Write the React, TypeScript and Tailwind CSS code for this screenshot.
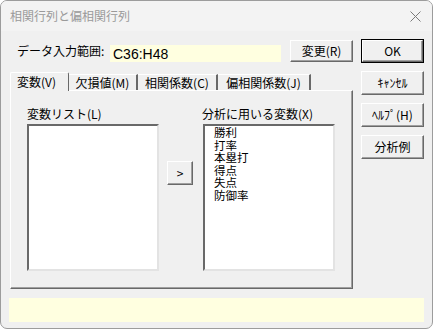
import React from 'react'

const font = { fontFamily: '"Noto Sans CJK JP", "Noto Sans", sans-serif' }

// classic raised 3D button
function Btn({ label, def = false, className = '' }: { label: string; def?: boolean; className?: string }) {
  return (
    <div className={`${def ? 'border border-black' : ''} ${className}`}>
      <div className="h-full w-full flex items-center justify-center border border-t-white border-l-white border-r-[#696969] border-b-[#696969] shadow-[inset_-1px_-1px_0_#a0a0a0] bg-[#f0f0f0] text-[12px] leading-[14px] text-black">
        {label}
      </div>
    </div>
  )
}

function ListBox({ items = [] }: { items?: string[] }) {
  return (
    <div className="w-[132px] h-[147px] bg-white border-2 border-t-[#696969] border-l-[#696969] border-r-[#e3e3e3] border-b-[#e3e3e3] pl-[9px] pt-0">
      {items.map(it => (
        <div key={it} className="text-[11.5px] leading-[12.5px] text-black">{it}</div>
      ))}
    </div>
  )
}

export default function App() {
  const tabs = [
    { label: '欠損値(M)', w: 'w-[69px]' },
    { label: '相関係数(C)', w: 'w-[80px]' },
    { label: '偏相関係数(J)', w: 'w-[93px]' },
  ]

  return (
    <div style={font} className="w-[433px] h-[329px] bg-[#f0f0f0] border border-[#9c9c9c] rounded-[7px] overflow-hidden flex flex-col">
      {/* ================= TITLE BAR ================= */}
      <div className="h-[30px] flex items-center justify-between pl-[9px] pr-[10px] bg-[#f3f3f3]">
        <span className="text-[12px] leading-[14px] text-[#9a9a9a]">相関行列と偏相関行列</span>
        <svg width="11" height="11" viewBox="0 0 11 11" className="mr-[1px]">
          <path d="M0.5 0.5 L10.5 10.5 M10.5 0.5 L0.5 10.5" stroke="#7a7a7a" strokeWidth="1" />
        </svg>
      </div>

      {/* ================= BODY ================= */}
      <div className="flex pl-[9px]">
        <div className="w-[343px]">
          <div className="mt-[9px] h-[22px] flex items-center">
            <span className="pl-[7px] w-[100px] text-[12px] leading-[14px] text-black">データ入力範囲:</span>
            <div className="w-[171px] h-[17px] mt-[5px] bg-[#ffffe0] flex items-center pl-[3px]">
              <span style={{ fontFamily: '"Liberation Sans", sans-serif' }} className="text-[14px] leading-[14px] text-black">C36:H48</span>
            </div>
            <Btn label="変更(R)" className="ml-auto w-[63px] h-[22px]" />
          </div>

          {/* ================= TABS ================= */}
          <div className="mt-[10px] h-[18px] flex items-end relative z-10">
            <div className="h-[19px] -mb-[1px] w-[59px] bg-[#f0f0f0] border border-b-0 border-t-white border-l-white border-r-[#696969] rounded-t-[2px] flex items-center pl-[6px] text-[12px] leading-[14px] text-black">
              変数(V)
            </div>
            {tabs.map(t => (
              <div key={t.label} className={`${t.w} h-[16px] border-r-2 border-r-[#696969] border-t border-t-white flex items-center justify-center text-[12px] leading-[14px] text-black`}>
                {t.label}
              </div>
            ))}
          </div>

          {/* ================= PANEL ================= */}
          <div className="h-[199px] border border-t-white border-l-white border-r-[#696969] border-b-[#696969] shadow-[inset_-1px_-1px_0_#a0a0a0] pl-[16px] pt-[16px]">
            <div className="flex">
              <div>
                <div className="text-[12px] leading-[14px] text-black mb-[3px]">変数リスト(L)</div>
                <ListBox />
              </div>
              <div className="ml-[8px] mr-[10px] pt-[54px]">
                <Btn label=">" className="w-[26px] h-[24px]" />
              </div>
              <div>
                <div className="text-[12px] leading-[14px] text-black mb-[3px] -ml-[1px]">分析に用いる変数(X)</div>
                <ListBox items={['勝利', '打率', '本塁打', '得点', '失点', '防御率']} />
              </div>
            </div>
          </div>
        </div>

        {/* ================= RIGHT BUTTONS ================= */}
        <div className="ml-[8px] mt-[8px] w-[63px] flex flex-col gap-[8px]">
          <Btn label="OK" def className="h-[24px]" />
          <Btn label="ｷｬﾝｾﾙ" className="h-[24px]" />
          <Btn label="ﾍﾙﾌﾟ(H)" className="h-[24px]" />
          <Btn label="分析例" className="h-[24px]" />
        </div>
      </div>

      {/* ================= STATUS BAR ================= */}
      <div className="mt-[9px] mx-[8px] h-[24px] bg-[#ffffe0]" />
    </div>
  )
}
